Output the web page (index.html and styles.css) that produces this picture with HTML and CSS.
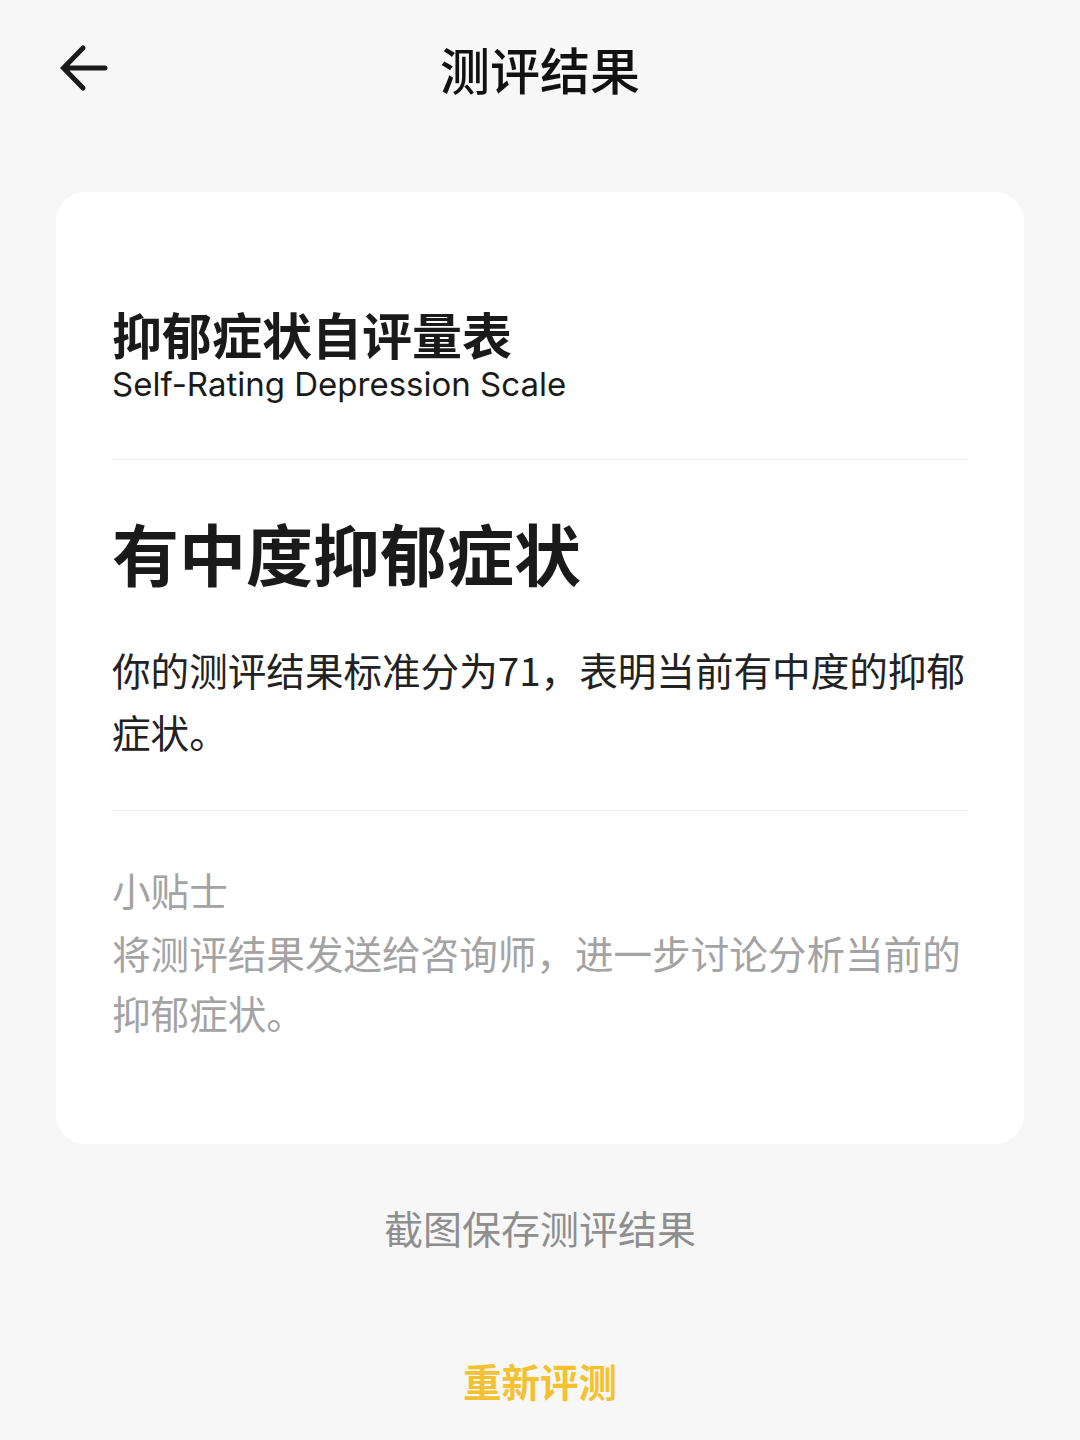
FILE: index.html
```html
<!DOCTYPE html>
<html lang="zh-CN">
<head>
<meta charset="utf-8">
<title>测评结果</title>
<link rel="stylesheet" href="styles.css">
</head>
<body>
<div class="page">
  <header class="topbar">
    <div class="back">
      <svg class="back-icon" viewBox="0 0 48 48" width="48" height="48" aria-hidden="true">
        <path d="M4 24 H45 M23 4 L3.5 24 L23 44" fill="none" stroke="#1a1a1a" stroke-width="5" stroke-linecap="round" stroke-linejoin="miter"/>
      </svg>
    </div>
    <h1 class="title">测评结果</h1>
    <div class="spacer"></div>
  </header>

  <main class="card">
    <section class="scale">
      <h2 class="scale-name">抑郁症状自评量表</h2>
      <p class="scale-en">Self-Rating Depression Scale</p>
    </section>
    <div class="divider"></div>
    <section class="result">
      <h3 class="result-title">有中度抑郁症状</h3>
      <p class="result-desc">你的测评结果标准分为71，表明当前有中度的抑郁症状。</p>
    </section>
    <div class="divider"></div>
    <section class="tips">
      <h4 class="tips-title">小贴士</h4>
      <p class="tips-text">将测评结果发送给咨询师，进一步讨论分析当前的抑郁症状。</p>
    </section>
  </main>

  <div class="actions">
    <p class="save-hint">截图保存测评结果</p>
    <button class="retest" type="button">重新评测</button>
  </div>
</div>
</body>
</html>
```

FILE: styles.css
```css
* { box-sizing: border-box; }

html, body {
  margin: 0;
  padding: 0;
  background: #f7f7f7;
}

body {
  font-family: "Noto Sans CJK SC", sans-serif;
  color: #1a1a1a;
}

.page {
  width: 1080px;
  min-height: 1440px;
  display: flex;
  flex-direction: column;
  align-items: center;
}

.topbar {
  width: 100%;
  height: 136px;
  display: grid;
  grid-template-columns: 1fr auto 1fr;
  align-items: center;
}

.back {
  padding-left: 60px;
  display: flex;
  align-items: center;
}

.back-icon { display: block; }

.title {
  margin: 0;
  font-family: "Noto Sans CJK SC", sans-serif;
  font-size: 50px;
  line-height: 60px;
  font-weight: 500;
  color: #111;
}

.card {
  margin-top: 56px;
  width: 968px;
  background: #ffffff;
  border-radius: 30px;
  padding: 0 56px 102px;
}

.scale {
  padding-top: 113px;
  padding-bottom: 55px;
}

.scale-name {
  margin: 0;
  font-family: "Noto Sans CJK SC", sans-serif;
  font-size: 50px;
  line-height: 56px;
  font-weight: 700;
  color: #1a1a1a;
}

.scale-en {
  margin: 3px 0 0;
  font-family: Inter, "Noto Sans", sans-serif;
  font-size: 33px;
  line-height: 40px;
  color: #1a1a1a;
}

.divider {
  height: 1px;
  background: #eeeeee;
}

.result {
  padding-top: 52px;
  padding-bottom: 48px;
}

.result-title {
  margin: 0;
  font-family: "Noto Sans CJK SC", sans-serif;
  font-size: 67px;
  line-height: 80px;
  font-weight: 700;
  color: #1a1a1a;
}

.result-desc {
  margin: 46px 0 0;
  font-family: "Noto Sans CJK SC", sans-serif;
  font-size: 38.6px;
  line-height: 62px;
  color: #222;
}

.tips {
  padding-top: 48px;
}

.tips-title {
  margin: 0;
  font-family: "Noto Sans CJK SC", sans-serif;
  font-size: 38.6px;
  line-height: 60px;
  font-weight: 400;
  color: #a3a3a3;
}

.tips-text {
  margin: 3px 0 0;
  font-family: "Noto Sans CJK SC", sans-serif;
  font-size: 38.6px;
  line-height: 60px;
  color: #a3a3a3;
}

.actions {
  display: flex;
  flex-direction: column;
  align-items: center;
}

.save-hint {
  margin: 53px 0 0;
  font-family: "Noto Sans CJK SC", sans-serif;
  font-size: 39px;
  line-height: 60px;
  color: #8e8e8e;
}

.retest {
  margin-top: 93px;
  padding: 0;
  border: 0;
  background: none;
  font-family: "Noto Sans CJK SC", sans-serif;
  font-size: 38.5px;
  line-height: 60px;
  font-weight: 700;
  color: #f4c133;
  cursor: pointer;
}
```
